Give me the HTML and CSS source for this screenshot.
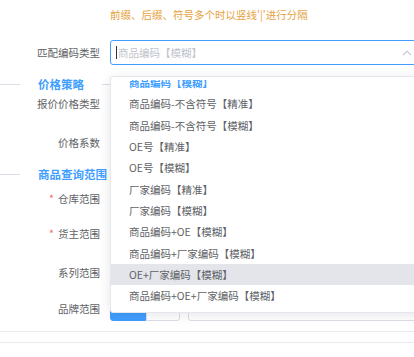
FILE: index.html
```html
<!DOCTYPE html>
<html lang="zh-CN">
  <head>
    <meta charset="UTF-8" />
    <meta name="viewport" content="width=device-width, initial-scale=1.0" />
    <title>编码匹配设置</title>
    <link rel="stylesheet" href="styles.css">
  </head>
  <body>
    <div class="page">
      <div class="hint">前缀、后缀、符号多个时以竖线'|'进行分隔</div>

      <div class="form-item select-row">
        <label class="label">匹配编码类型</label>
        <div class="select is-focus">
          <span class="caret"></span>
          <span class="placeholder">商品编码【模糊】</span>
          <svg class="arrow" width="10" height="6" viewBox="0 0 10 6">
            <path d="M1 5.2 L5 1.2 L9 5.2" fill="none" stroke="#c0c4cc" stroke-width="1.1" />
          </svg>
        </div>
      </div>

      <div class="divider d-price">
        <span class="divider-line short"></span>
        <span class="divider-text">价格策略</span>
        <span class="divider-line"></span>
      </div>
      <div class="form-item row-quote"><label class="label">报价价格类型</label></div>
      <div class="form-item row-ratio"><label class="label">价格系数</label></div>

      <div class="divider d-range">
        <span class="divider-line short"></span>
        <span class="divider-text">商品查询范围</span>
        <span class="divider-line"></span>
      </div>
      <div class="form-item row-store"><label class="label"><i class="req">*</i>仓库范围</label></div>
      <div class="form-item row-owner"><label class="label"><i class="req">*</i>货主范围</label></div>
      <div class="form-item row-series"><label class="label">系列范围</label></div>
      <div class="form-item row-brand">
        <label class="label">品牌范围</label>
        <div class="btn-group">
          <button class="btn btn-primary" aria-label="全部"></button>
          <button class="btn" aria-label="指定"></button>
        </div>
        <div class="input-box"></div>
      </div>

      <div class="rule"></div>
      <div class="rule second"></div>

      <div class="dropdown">
        <div class="scroll">
          <ul class="options">
            <li class="selected">商品编码【模糊】</li>
            <li>商品编码-不含符号【精准】</li>
            <li>商品编码-不含符号【模糊】</li>
            <li>OE号【精准】</li>
            <li>OE号【模糊】</li>
            <li>厂家编码【精准】</li>
            <li>厂家编码【模糊】</li>
            <li>商品编码+OE【模糊】</li>
            <li>商品编码+厂家编码【模糊】</li>
            <li class="hover">OE+厂家编码【模糊】</li>
            <li>商品编码+OE+厂家编码【模糊】</li>
          </ul>
        </div>
      </div>
    </div>
  </body>
</html>
```

FILE: styles.css
```css
body {
  margin: 0;
  background: #fff;
  font-family: "Noto Sans CJK SC", "Noto Sans", sans-serif;
  font-size: 10.5px;
  color: #606266;
  overflow: hidden;
}
.page {
  position: relative;
  width: 414px;
  height: 357px;
  overflow: hidden;
}
.hint {
  height: 30px;
  line-height: 30px;
  padding-left: 110px;
  color: #e6a23c;
}
.form-item {
  display: flex;
  align-items: center;
  height: 18px;
}
.label {
  flex: none;
  width: 110px;
  padding-right: 10px;
  box-sizing: border-box;
  text-align: right;
  color: #606266;
}
.req {
  font-style: normal;
  color: #f56c6c;
  margin-right: 4px;
}
.select-row {
  height: 25px;
  margin-top: 10px;
}
.select {
  flex: none;
  display: flex;
  align-items: center;
  width: 314px;
  height: 25px;
  box-sizing: border-box;
  border: 1px solid #409eff;
  border-radius: 3px;
  padding: 0 11px 0 5px;
}
.caret {
  width: 1px;
  height: 13px;
  background: #333;
  margin-right: 1px;
}
.placeholder {
  color: #c0c4cc;
}
.arrow {
  margin-left: auto;
  margin-top: 1px;
}
.divider {
  display: flex;
  align-items: center;
  height: 20px;
}
.divider-line {
  flex: 1;
  height: 1px;
  background: #dcdfe6;
}
.divider-line.short {
  flex: none;
  width: 20px;
}
.divider-text {
  padding: 0 18px;
  font-size: 11.5px;
  font-weight: bold;
  color: #409eff;
}
.d-price { margin-top: 9px; }
.row-quote { margin-top: 0; }
.row-ratio { margin-top: 21px; }
.d-range { margin-top: 13px; }
.row-store { margin-top: 5px; }
.row-owner { margin-top: 17px; }
.row-series { margin-top: 21px; }
.row-brand {
  height: 25px;
  margin-top: 15px;
}
.btn-group {
  display: flex;
  flex: none;
}
.btn {
  height: 25px;
  width: 34px;
  padding: 0;
  border: 1px solid #dcdfe6;
  background: #fff;
  border-radius: 0 3px 3px 0;
}
.btn-primary {
  width: 36px;
  border-color: #409eff;
  background: #409eff;
  border-radius: 3px 0 0 3px;
}
.input-box {
  flex: none;
  width: 240px;
  height: 25px;
  margin-left: 8px;
  box-sizing: border-box;
  border: 1px solid #dcdfe6;
  border-radius: 3px;
}
.rule {
  margin-top: 10px;
  height: 1px;
  background: #e8eaef;
}
.rule.second {
  margin-top: 10px;
}
.dropdown {
  position: absolute;
  left: 110px;
  top: 76px;
  width: 320px;
  height: 237px;
  box-sizing: border-box;
  padding-top: 3px;
  background: #fff;
  border: 1px solid #e4e7ed;
  border-radius: 3px;
  box-shadow: 0 2px 12px rgba(0, 0, 0, 0.1);
}
.scroll {
  height: 100%;
  overflow: hidden;
}
.options {
  list-style: none;
  margin: -8px 0 0;
  padding: 0;
}
.options li {
  height: 21.33px;
  line-height: 21.33px;
  padding-left: 18px;
  white-space: nowrap;
  color: #606266;
}
.options li.selected {
  color: #409eff;
  font-weight: bold;
}
.options li.hover {
  background: #e3e5eb;
}
```
